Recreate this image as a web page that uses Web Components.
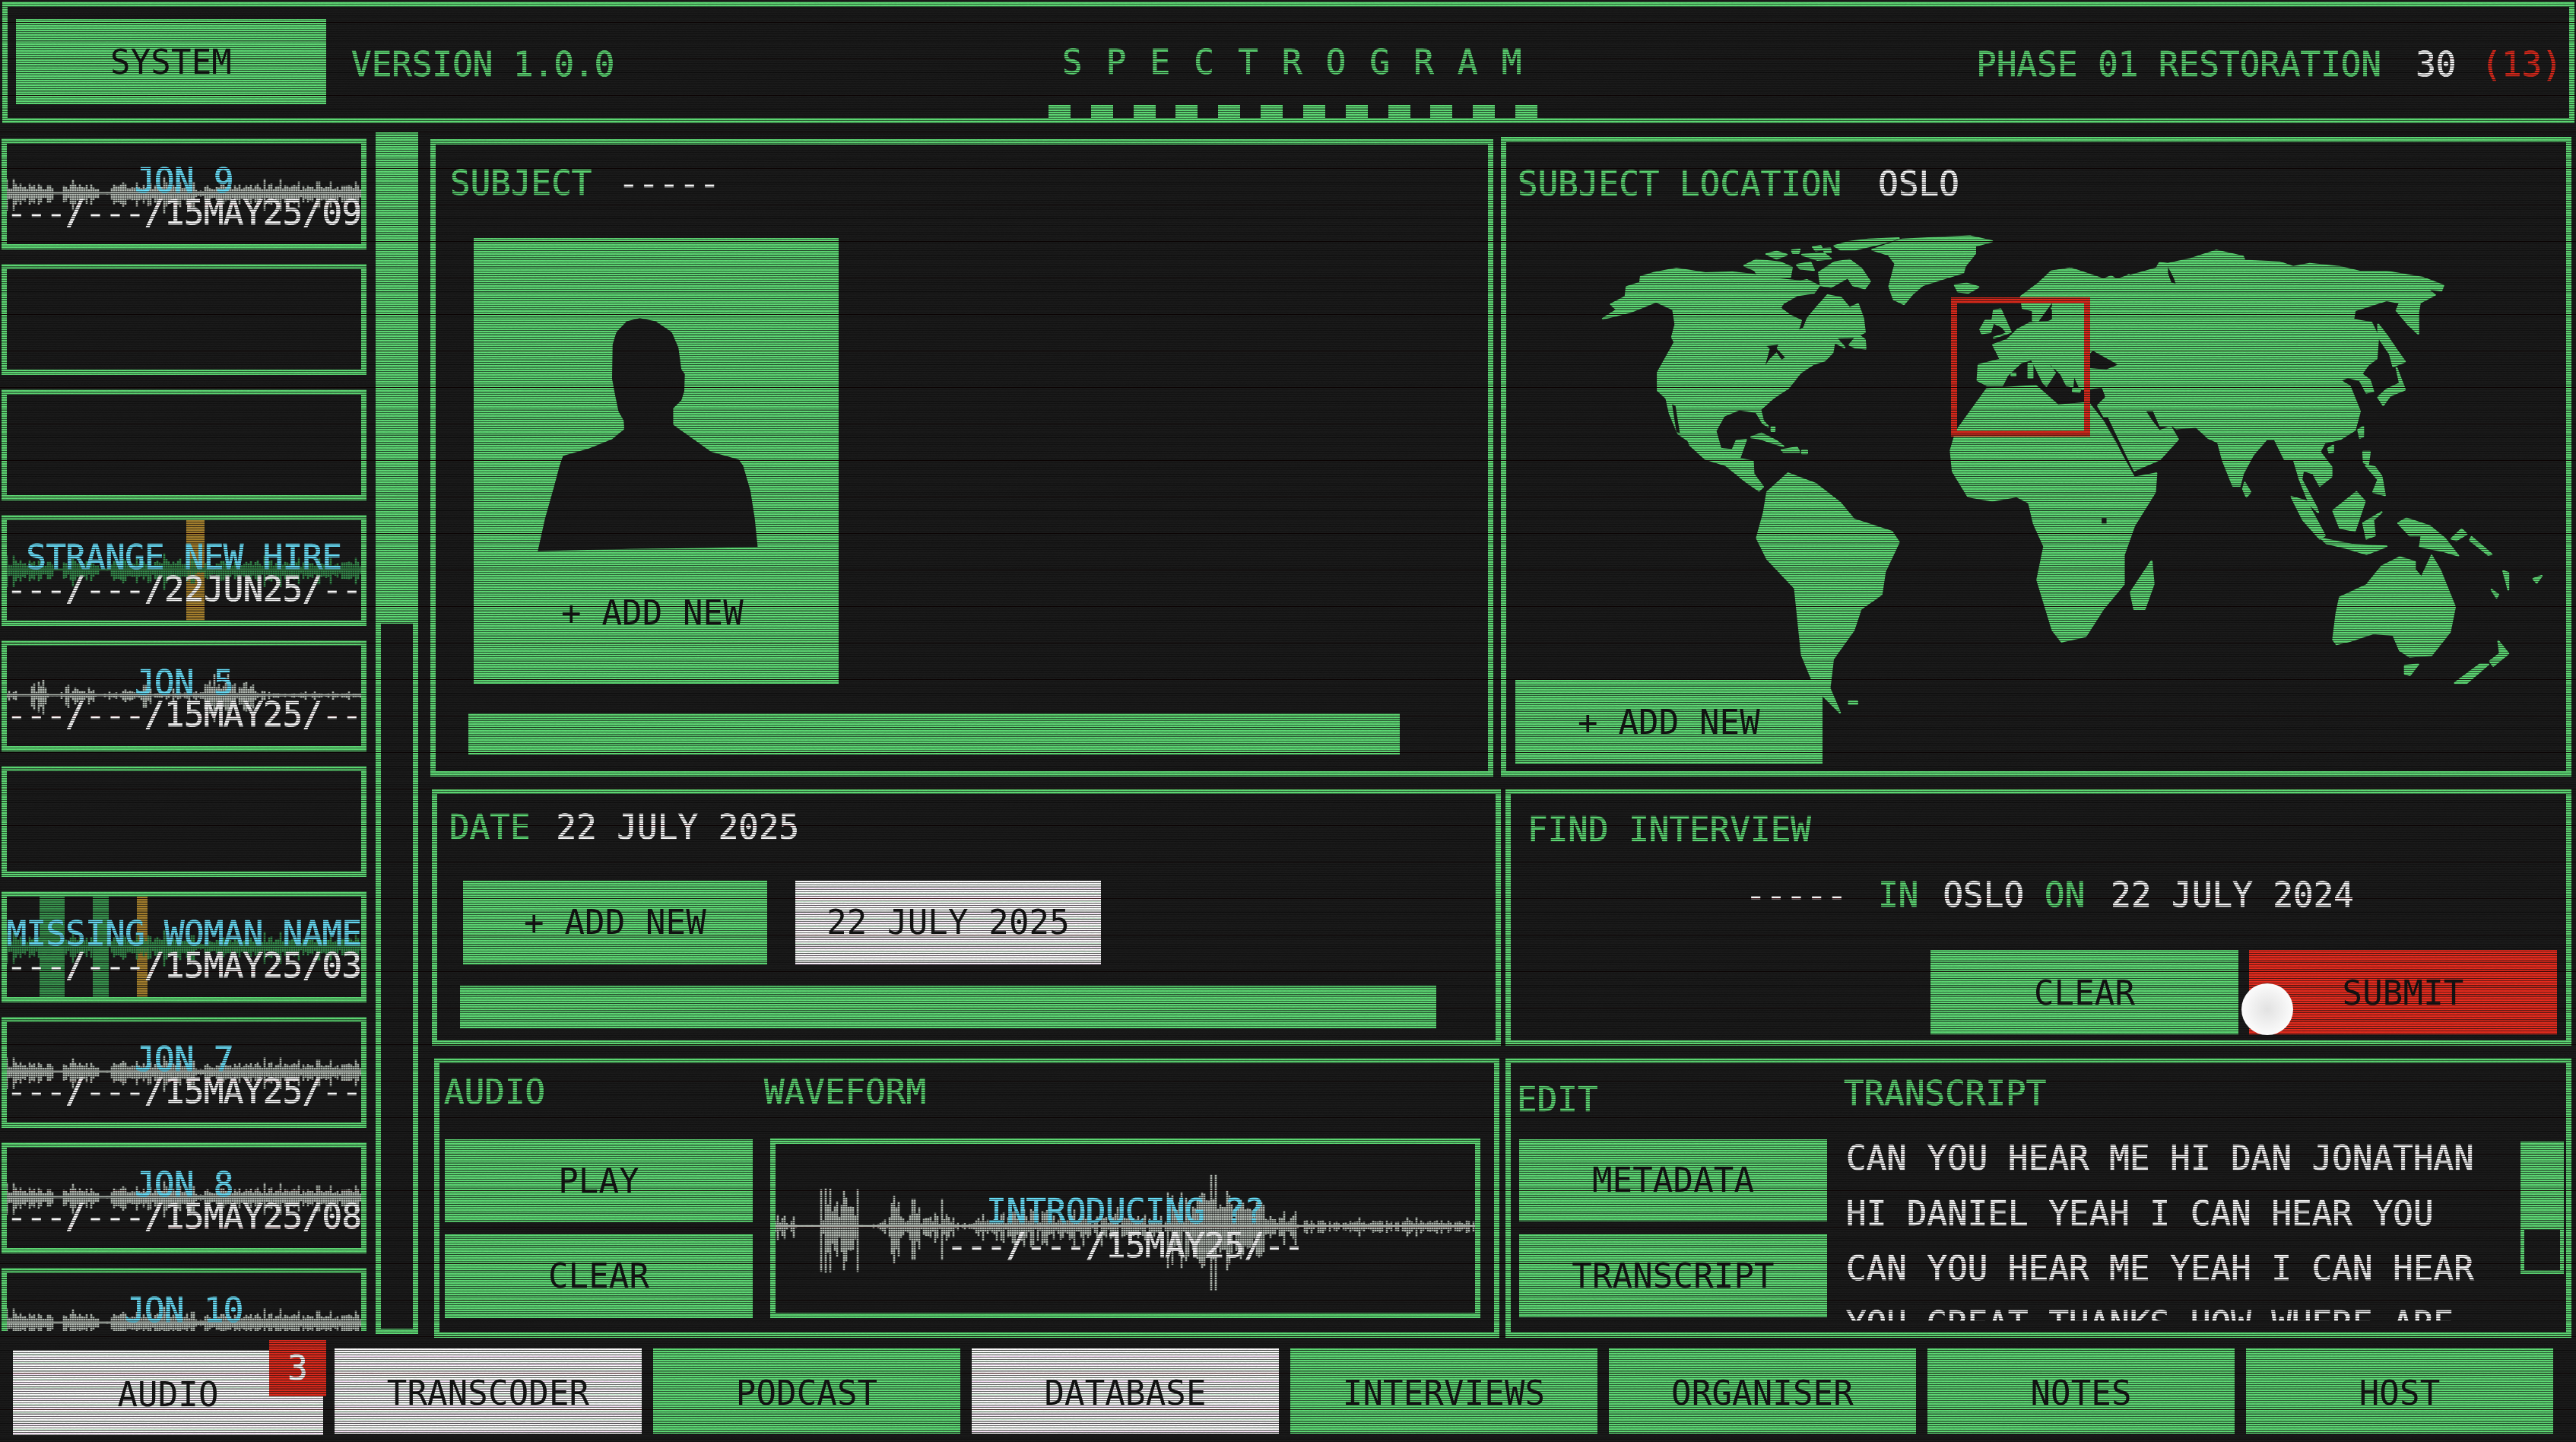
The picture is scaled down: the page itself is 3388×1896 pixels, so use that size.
<!DOCTYPE html>
<html lang="en">
<head>
<meta charset="utf-8">
<title>Spectrogram</title>
<style>
  html, body { margin: 0; padding: 0; background: #1a1a1a; }
  body { width: 3388px; height: 1896px; overflow: hidden;
    font: 400 44px/1 "DejaVu Sans Mono", "Liberation Mono", monospace; letter-spacing:.15px; -webkit-text-stroke:.7px currentColor;
    --g: #5fdc76; --ink: #131313; --cy: #6be4ff; --rd: #e02a1c; --bg:#1a1a1a; color: var(--g); }
</style>
</head>
<body>
<sg-screen>
  <sg-header>
    <sg-btn slot="sys" style="width:408px;height:112px;padding-top:2px;box-sizing:border-box">SYSTEM</sg-btn>
    <span slot="ver">VERSION 1.0.0</span>
    <span slot="title">SPECTROGRAM</span>
    <span slot="phase">PHASE 01 RESTORATION</span>
    <span slot="count">30</span>
    <span slot="over">(13)</span>
  </sg-header>

  <sg-main>
    <sg-list slot="list">
      <sg-clip name="JON 9" date="---/---/15MAY25/09" wave="a"></sg-clip>
      <sg-clip></sg-clip>
      <sg-clip></sg-clip>
      <sg-clip name="STRANGE NEW HIRE" date="---/---/22JUN25/--" wave="a" tone="green" bands="236,24,a"></sg-clip>
      <sg-clip name="JON 5" date="---/---/15MAY25/--" wave="b"></sg-clip>
      <sg-clip></sg-clip>
      <sg-clip name="MISSING WOMAN NAME" date="---/---/15MAY25/03" wave="a" tone="green" bands="43,33,g;113,21,g;171,14,a"></sg-clip>
      <sg-clip name="JON 7" date="---/---/15MAY25/--" wave="a"></sg-clip>
      <sg-clip name="JON 8" date="---/---/15MAY25/08" wave="a"></sg-clip>
      <sg-clip name="JON 10" date="" wave="a"></sg-clip>
    </sg-list>
    <sg-scroll slot="scroll" style="width:56px;height:1580px" thumb="646"></sg-scroll>

    <sg-panel slot="subject" style="margin:3px 10px 0 0;padding:29px 0 0 19px">
      <sg-title label="SUBJECT" gap="35"><b>-----</b></sg-title>
      <sg-photo style="margin:50px 0 0 31px"></sg-photo>
      <sg-bar style="width:1225px;height:54px;margin:39px 0 0 24px"></sg-bar>
    </sg-panel>

    <sg-panel slot="location" style="padding:33px 0 10px 12px;display:flex;flex-direction:column">
      <sg-map></sg-map>
      <sg-title label="SUBJECT LOCATION" gap="48" style="margin-left:3px"><b>OSLO</b></sg-title>
      <sg-btn style="width:404px;height:110px;margin-top:auto;position:relative;padding-top:2px;box-sizing:border-box">+ ADD NEW</sg-btn>
    </sg-panel>

    <sg-panel slot="date" style="margin-left:2px;padding:22px 0 0 16px">
      <sg-title label="DATE" gap="34"><b>22 JULY 2025</b></sg-title>
      <div style="display:flex;gap:37px;margin:48px 0 0 18px">
        <sg-btn style="width:400px;height:110px">+ ADD NEW</sg-btn>
        <sg-btn tone="white" style="width:402px;height:110px">22 JULY 2025</sg-btn>
      </div>
      <sg-bar style="width:1284px;height:56px;margin:28px 0 0 14px"></sg-bar>
    </sg-panel>

    <sg-panel slot="find" style="margin-left:6px;padding:25px 12px 0 22px">
      <sg-title label="FIND INTERVIEW"></sg-title>
      <sg-query style="margin:42px 0 0 287px">
        <b>-----</b><span style="margin-left:41px">IN</span><b style="margin-left:32px">OSLO</b><span style="margin-left:27px">ON</span><b style="margin-left:34px">22 JULY 2024</b>
      </sg-query>
      <div style="display:flex;justify-content:flex-end;gap:14px;margin-top:50px">
        <sg-btn style="width:405px;height:111px;padding-top:3px;box-sizing:border-box">CLEAR</sg-btn>
        <sg-btn tone="red" style="width:405px;height:111px;padding-top:3px;box-sizing:border-box">SUBMIT</sg-btn>
      </div>
    </sg-panel>

    <sg-panel slot="audio" style="margin:0 2px 0 5px;padding:16px 0 0 7px">
      <div style="display:grid;grid-template-columns:405px 934px;column-gap:23px">
        <sg-title label="AUDIO" style="margin-left:-1px"></sg-title>
        <sg-title label="WAVEFORM" style="margin-left:-8px"></sg-title>
        <div style="grid-row:2;grid-column:1;display:flex;flex-direction:column;gap:16px;margin-top:40px">
          <sg-btn style="height:109px">PLAY</sg-btn>
          <sg-btn style="height:110px">CLEAR</sg-btn>
        </div>
        <sg-viewer style="grid-row:2;grid-column:2;margin-top:39px" name="INTRODUCING ??" date="---/---/15MAY25/--"></sg-viewer>
      </div>
    </sg-panel>

    <sg-panel slot="edit" style="margin-left:6px;padding:19px 0 0 11px">
      <div style="display:grid;grid-template-columns:405px 944px;column-gap:25px">
        <sg-title label="EDIT" style="margin:7px 0 0 -3px"></sg-title>
        <sg-title label="TRANSCRIPT" style="margin:-1px 0 0 -3px"></sg-title>
        <div style="grid-row:2;grid-column:1;display:flex;flex-direction:column;gap:17px;margin-top:30px">
          <sg-btn style="height:108px">METADATA</sg-btn>
          <sg-btn style="height:109px">TRANSCRIPT</sg-btn>
        </div>
        <sg-transcript style="grid-row:2;grid-column:2;margin-top:19px">
          <div>CAN YOU HEAR ME HI DAN JONATHAN</div>
          <div>HI DANIEL YEAH I CAN HEAR YOU</div>
          <div>CAN YOU HEAR ME YEAH I CAN HEAR</div>
          <div>YOU GREAT THANKS HOW WHERE ARE</div>
        </sg-transcript>
      </div>
    </sg-panel>
  </sg-main>

  <sg-tabs>
    <sg-btn tone="white" class="t" style="width:408px;margin-top:2px;position:relative">AUDIO<sg-badge>3</sg-badge></sg-btn>
    <sg-btn tone="white" class="t">TRANSCODER</sg-btn>
    <sg-btn class="t">PODCAST</sg-btn>
    <sg-btn tone="white" class="t">DATABASE</sg-btn>
    <sg-btn class="t">INTERVIEWS</sg-btn>
    <sg-btn class="t">ORGANISER</sg-btn>
    <sg-btn class="t">NOTES</sg-btn>
    <sg-btn class="t">HOST</sg-btn>
  </sg-tabs>

  <sg-cursor></sg-cursor>
</sg-screen>

<script>
function el(name, css, html) {
  const sheet = `<style>${css}</style>${html}`;
  customElements.define(name, class extends HTMLElement {
    constructor() { super(); this.attachShadow({ mode: 'open' }).innerHTML = sheet; }
  });
}

/* ---- deterministic waveform drawing ---- */
const ENV = {
  a: [[0,.13,.62],[.13,.155,.02],[.155,.26,.6],[.26,.29,.04],[.29,.53,.72],[.53,.56,.3],[.56,.78,.62],[.78,1,.52]],
  b: [[0,.03,.35],[.03,.065,.03],[.065,.12,1],[.12,.15,.05],[.15,.162,.2],[.162,.178,1],[.178,.255,.5],[.255,.285,.1],[.285,.32,.22],
      [.32,.41,.45],[.41,.47,.3],[.47,.53,.35],[.53,.56,.3],[.56,.7,.95],[.7,.75,.28],[.75,.83,.16],[.83,1,.16]]
};
function wavePath(kind, W, H) {
  let seed = kind === 'a' ? 4721 : 913, d = '';
  const rnd = () => (seed = (seed * 16807) % 2147483647) / 2147483647;
  const c = H / 2, env = ENV[kind];
  for (let x = 0; x < W; x += 3) {
    const f = x / W, seg = env.find(s => f >= s[0] && f < s[1]) || env[env.length - 1];
    let a = seg[2] * (.25 + rnd() * .45);
    if (rnd() > .9) a = seg[2];
    if (kind === 'b' && rnd() < .2) a *= .3;
    d += `M${x} ${(c - a * c * .8).toFixed(1)}V${(c + a * c).toFixed(1)}`;
  }
  return d;
}
function waveSvg(kind, W, H, color) {
  return `<svg viewBox="0 0 ${W} ${H}" preserveAspectRatio="none" style="display:block;width:100%;height:100%">
    <path d="${wavePath(kind, W, H)}" stroke="${color}" stroke-width="2.6" fill="none"/>
    <rect x="0" y="${H/2-1.5}" width="${W}" height="3" fill="${color}"/></svg>`;
}

el('sg-screen', `
  :host { display:block; position:relative; width:3388px; height:1896px; overflow:hidden; padding-top:2px; box-sizing:border-box; background:var(--bg); }
  .scan, .red, svg { position:absolute; inset:0; width:100%; height:100%; pointer-events:none; z-index:10; }
  .scan { background:
    repeating-linear-gradient(180deg, transparent 0 10px, rgba(14,14,14,.3) 10px 11px),
    repeating-linear-gradient(180deg, transparent 0 2px, rgba(14,14,14,.62) 2px 3px); }
  .red { mix-blend-mode:multiply; background:
    repeating-linear-gradient(180deg, #fff 0 29px, #8a2028 29px 30px, #fff 30px 47px, #aaa 47px 48px); }
  svg { mix-blend-mode:multiply; opacity:.5; }
`, `<slot></slot><div class="scan"></div><div class="red"></div>
  <svg xmlns="http://www.w3.org/2000/svg"><filter id="n" x="0" y="0" width="100%" height="100%"><feTurbulence type="fractalNoise" baseFrequency=".35 .95" numOctaves="2" seed="7"/><feColorMatrix values="0 0 0 0 .75  0 0 0 0 .75  0 0 0 0 .75  1.6 0 0 0 -.25"/></filter><rect width="100%" height="100%" filter="url(#n)"/></svg>`);

el('sg-header', `
  :host { display:grid; grid-template-columns:1358px 643px 1fr; width:3383px; height:160px; margin-left:3px; box-sizing:border-box;
    border:7px solid var(--g); padding:0 9px 0 11px; }
  .l { display:flex; gap:33px; padding-top:16px; }
  .v { padding-top:38px; }
  .c { display:flex; flex-direction:column; justify-content:space-between; padding-top:51px; }
  .t { letter-spacing:31.3px; margin-left:18px; white-space:nowrap; }
  .ticks { display:flex; justify-content:space-between; }
  .ticks i { display:block; width:29px; height:17px; background:var(--g); }
  .r { display:flex; justify-content:flex-end; padding-top:54px; }
  ::slotted([slot=count]) { color:#fff; margin-left:45px; }
  ::slotted([slot=over]) { color:var(--rd); margin-left:33px; }
`, `<div class="l"><slot name="sys"></slot><div class="v"><slot name="ver"></slot></div></div>
  <div class="c"><div class="t"><slot name="title"></slot></div><div class="ticks">${'<i></i>'.repeat(12)}</div></div>
  <div class="r"><slot name="phase"></slot><slot name="count"></slot><slot name="over"></slot></div>`);

el('sg-main', `
  :host { display:grid; grid-template-columns:480px 56px 1408px 1408px; grid-template-rows:841px 338px 368px; row-gap:0;
    margin:12px 0 0 2px; height:1585px; }
  .a { grid-row:1 / span 3; grid-column:1; padding-top:8px; margin-right:-12px; }
  .b { grid-row:1 / span 3; grid-column:2; margin-left:12px; }
  .c { grid-row:1 / span 3; grid-column:3 / span 2; margin:6px -28px 0 28px; display:grid;
    grid-template-columns:1408px 1408px; grid-template-rows:841px 338px 368px; row-gap:16px; }
`, `<div class="a"><slot name="list"></slot></div>
    <div class="b"><slot name="scroll"></slot></div>
    <div class="c">
      <slot name="subject"></slot><slot name="location"></slot>
      <slot name="date"></slot><slot name="find"></slot>
      <slot name="audio"></slot><slot name="edit"></slot>
    </div>`);

el('sg-list', `
  :host { display:flex; flex-direction:column; gap:19px; width:480px; height:1568px; overflow:hidden; }
`, `<slot></slot>`);

customElements.define('sg-clip', class extends HTMLElement {
  constructor() {
    super();
    this.attachShadow({ mode: 'open' });
  }
  connectedCallback() {
    const name = this.getAttribute('name') || '', date = this.getAttribute('date') || '',
      wave = this.getAttribute('wave'), green = this.getAttribute('tone') === 'green',
      bands = (this.getAttribute('bands') || '').split(';').filter(Boolean).map(b => b.split(','));
    this.shadowRoot.innerHTML = `<style>
      :host { display:block; flex:none; position:relative; width:480px; height:146px; box-sizing:border-box; border:7px solid var(--g); }
      .band { position:absolute; top:0; bottom:0; }
      .wave { position:absolute; left:0; right:0; top:28px; height:74px; }
      .txt { position:relative; display:flex; flex-direction:column; align-items:center; padding-top:28px; line-height:42px; letter-spacing:-.55px; white-space:nowrap; }
      .n { color:var(--cy); } .d { color:#fff; }
    </style>
    ${bands.map(b => `<div class="band" style="left:${b[0]}px;width:${b[1]}px;background:${b[2] === 'a' ? '#a8822e' : '#39964f'}"></div>`).join('')}
    ${wave ? `<div class="wave">${waveSvg(wave, 466, 74, green ? '#37904e' : '#b6beb6')}</div>` : ''}
    ${name ? `<div class="txt"><span class="n">${name}</span><span class="d">${date}</span></div>` : ''}`;
  }
});

customElements.define('sg-scroll', class extends HTMLElement {
  constructor() { super(); this.attachShadow({ mode: 'open' }); }
  connectedCallback() {
    this.shadowRoot.innerHTML = `<style>
      :host { display:block; box-sizing:border-box; border:7px solid var(--g); border-top:0; }
      div { height:${this.getAttribute('thumb')}px; background:var(--g); margin:0 -7px; }
    </style><div></div>`;
  }
});

el('sg-panel', `
  :host { display:block; position:relative; box-sizing:border-box; border:7px solid var(--g); min-width:0; }
`, `<slot></slot>`);

customElements.define('sg-title', class extends HTMLElement {
  constructor() { super(); this.attachShadow({ mode: 'open' }); }
  connectedCallback() {
    this.shadowRoot.innerHTML = `<style>
      :host { display:flex; gap:${this.getAttribute('gap') || 0}px; white-space:pre; position:relative; }
      ::slotted(b) { font-weight:400; color:#fff; }
    </style><span>${this.getAttribute('label')}</span><slot></slot>`;
  }
});

el('sg-query', `
  :host { display:flex; white-space:pre; }
  ::slotted(b) { font-weight:400; color:#fff; }
`, `<slot></slot>`);

el('sg-btn', `
  :host { display:flex; align-items:center; justify-content:center; background:var(--g); color:var(--ink); white-space:pre; flex:none; -webkit-text-stroke:0; }
  :host([tone=white]) { background:repeating-linear-gradient(180deg,#fff 0 5px,#d6f6dc 5px 6px,#fff 6px 10px,#f8dcf8 10px 11px); }
  :host([tone=red]) { background:#ec2c1e; }
  :host(.t) { width:404px; height:112px; box-sizing:border-box; padding-top:6px; }
`, `<slot></slot>`);

el('sg-bar', `:host { display:block; background:var(--g); }`, ``);

el('sg-badge', `
  :host { position:absolute; top:-13px; right:-4px; width:75px; height:74px; display:flex; align-items:center; justify-content:center;
    background:var(--rd); color:#fff; -webkit-text-stroke:.7px #fff; }
`, `<slot></slot>`);

el('sg-tabs', `
  :host { display:flex; gap:15px; padding-left:17px; margin-top:14px; align-items:flex-start; }
`, `<slot></slot>`);

el('sg-photo', `
  :host { display:block; position:relative; width:480px; height:586px; background:var(--g); color:var(--ink); -webkit-text-stroke:0; }
  svg { position:absolute; left:0; top:0; width:100%; height:100%; }
  span { position:absolute; left:0; right:10px; top:471px; text-align:center; white-space:pre; }
`, `<svg viewBox="165 57 1253 1435" preserveAspectRatio="none"><path fill="#1a1a1a" d="M385 1065 L410 960 L440 860 L460 790 L472 758 L560 735 L640 705 L682 672 L680 645 L662 615 L650 560 L640 510 L642 400 L655 360 L690 325 L735 315 L790 325 L845 360 L868 410 L878 480 L890 495 L888 550 L878 580 L850 605 L850 658 L905 695 L980 745 L1075 770 L1090 790 L1115 870 L1130 960 L1140 1052 L970 1055 L700 1058 Z"/></svg>
  <span>+ ADD NEW</span>`);

el('sg-map', `
  :host { position:absolute; left:119px; top:113px; width:1250px; height:650px; display:block; }
  svg { display:block; width:100%; height:100%; overflow:visible; }
  .l { fill:var(--g); stroke:var(--g); stroke-width:2.5px; stroke-linejoin:round; vector-effect:non-scaling-stroke; }
  .s { fill:#1a1a1a; }
`, `<svg viewBox="2100 300 1250 650">
  <g transform="translate(2100 290) scale(.4464 .3333)">
    <path class="l" d="M18 387L60 352L42 330L85 300L88 262L128 245L130 222L165 208L235 190L320 208L400 205L470 215L480 225L540 232L600 240L620 235L655 258L640 285L590 295L550 325L540 345L570 375L602 395L592 438L610 425L622 385L650 340L680 295L720 305L745 345L770 330L785 385L790 440L760 460L705 462L730 500L700 480L695 520L672 552L640 565L600 600L565 660L520 700L482 745L490 790L505 812L490 800L470 755L420 745L375 770L350 830L365 900L400 905L412 868L440 865L420 940L460 950L462 1000L490 1050L478 1065L440 1030L380 965L320 940L275 885L270 868L240 840L215 760L205 700L180 670L180 600L230 480L222 460L232 410L225 350L175 320L100 360Z"/>
    <path class="l" d="M812 115L900 75L1000 68L1100 62L1165 82L1115 100L1115 130L1085 180L1080 205L1020 230L960 255L930 290L905 330L875 310L862 260L880 170L860 135Z"/>
    <path class="l" d="M700 100L740 85L800 75L890 70L840 90L760 115L720 115Z"/>
    <path class="l" d="M500 132L530 122L560 135L530 150ZM575 118L598 115L595 128L578 128ZM435 178L470 155L540 165L575 185L570 222L480 225L465 195Z"/>
    <path class="l" d="M590 175L630 165L640 195L600 190ZM605 135L670 130L690 150L650 155ZM637 105L660 100L665 115L645 118ZM668 112L688 110L690 125L672 125Z"/>
    <path class="l" d="M655 205L700 165L745 155L780 190L805 240L790 268L755 255L740 225L690 262L660 255Z"/>
    <path class="l" d="M1055 255L1090 248L1125 262L1095 285L1065 280Z"/>
    <path class="l" d="M745 490L770 450L790 470L792 505L760 500Z"/>
    <path class="l" d="M455 855L485 840L530 870L550 890L520 878L480 860ZM545 905L590 895L597 912L550 912ZM605 908H620V918H605ZM515 815H524V830H515Z"/>
    <path class="s" d="M222 725L232 730L245 838L235 835ZM500 495L535 490L530 505L555 540L545 548L530 520L510 545L497 570L505 530L510 505Z"/>
    <path class="l" d="M1250 300L1300 250L1340 200L1400 190L1490 230L1500 260L1568 215L1568 700L1500 690L1490 655L1430 665L1425 600L1405 610L1402 655L1385 650L1368 605L1310 530L1350 600L1325 652L1316 640L1282 548L1250 560L1210 610L1195 650L1150 650L1122 630L1125 570L1190 548L1168 490L1210 470L1240 430L1275 405L1330 400L1365 380L1340 345L1388 325L1340 322L1300 395L1285 395L1285 355L1255 345Z"/>
    <path class="s" d="M1360 265L1385 262L1370 290L1345 290Z"/>
    <path class="l" d="M1165 400L1170 355L1190 350L1200 380L1220 440L1170 462L1210 445L1195 420ZM1130 430L1145 395L1170 395L1160 440L1135 445ZM1272 565H1284V620H1272ZM1222 604H1234V612H1222Z"/>
  </g>
  <g transform="translate(2700 300) scale(.4388 .4082)">
    <path class="l" d="M0 140L50 130L150 165L175 155L190 165L260 145L310 130L320 112L345 115L410 100L490 72L570 92L575 105L680 110L720 125L770 115L860 125L920 140L1000 140L1110 160L1170 185L1165 200L1120 195L1145 215L1100 240L1095 270L1095 340L1065 310L1030 265L1040 240L1000 232L905 265L900 295L955 305L975 350L970 420L945 440L925 470L950 490L960 525L940 530L920 490L885 480L860 490L890 510L920 590L905 650L860 680L815 690L800 720L835 770L835 800L800 830L780 790L750 780L745 810L790 900L795 915L770 890L740 810L722 745L695 745L665 680L640 680L600 730L570 790L560 830L540 830L510 750L495 690L465 675L430 640L370 645L345 625L375 680L320 745L245 780L210 730L155 610L135 572L160 545L155 512L80 512L60 465L40 440L0 450Z"/>
    <path class="s" d="M95 420L120 395L195 440L160 455L100 450ZM150 610L165 610L205 700L240 778L225 770L195 700ZM280 590L300 590L320 640L345 640L320 650L295 615ZM345 125L362 160L368 178L355 175L345 145Z"/>
    <path class="l" d="M975 310L1000 345L1035 400L1055 430L1020 445L1010 405L975 350ZM975 545L1000 520L1040 500L1030 450L1055 520L1010 540L990 570ZM915 650L930 640L930 670L920 675ZM825 710L840 700L840 720L828 722ZM930 720L950 720L945 760L932 755ZM938 765L965 770L985 800L995 860L960 850L975 810ZM840 910L910 850L935 880L905 975L860 965ZM715 865L760 880L815 990L800 1000L750 940ZM805 1000L900 1020L1000 1025L940 1050L880 1030L820 1015ZM575 820L592 850L580 865L570 840ZM930 950L985 915L960 940L965 990L940 1000ZM1035 950L1060 935L1130 960L1175 1000L1215 1055L1170 1040L1100 1025L1105 990L1070 990ZM1195 1000L1225 970L1240 985L1210 1005ZM1255 995L1315 1050L1305 1052L1250 1005ZM850 1240L860 1190L940 1150L985 1090L1040 1060L1085 1075L1085 1100L1105 1125L1135 1055L1160 1100L1205 1220L1190 1300L1135 1375L1070 1380L1040 1360L1020 1310L960 1305L890 1330L850 1340L840 1325ZM1055 1410L1095 1405L1070 1440L1055 1435ZM1205 1465L1280 1405L1305 1405L1240 1465ZM1310 1395L1340 1370L1335 1330L1350 1350L1365 1370L1320 1410ZM1440 1130L1465 1120L1450 1142ZM1315 1165L1335 1180L1330 1190ZM1350 1105L1365 1110L1365 1165L1358 1135Z"/>
    <path class="l" d="M60 518L82 518L80 528L60 526Z"/>
  </g>
  <g transform="translate(1960 170) scale(.9107 .5485)">
    <path class="l" d="M717 623L673 724L665 770L668 820L690 880L725 890L760 880L778 895L785 945L800 1000L790 1080L812 1200L825 1228L860 1215L885 1150L915 1090L915 1020L930 950L960 870L962 825L930 835L915 790L885 700L864 656L820 662L788 615Z"/>
    <path class="l" d="M400 870L430 825L470 850L505 895L525 935L580 965L590 990L570 1060L565 1115L535 1150L525 1200L495 1270L490 1340L505 1398L470 1340L450 1260L440 1100L400 1030L385 980L395 920Z"/>
    <path class="l" d="M955 1035L958 1090L945 1150L930 1150L925 1110L945 1060ZM518 1372H530V1378H518Z"/>
    <path class="s" d="M883 932H890V945H883Z"/>
  </g>
  <rect x="2570" y="395" width="175" height="175" fill="none" stroke="#e02a1c" stroke-width="8"/>
</svg>`);

customElements.define('sg-viewer', class extends HTMLElement {
  constructor() { super(); this.attachShadow({ mode: 'open' }); }
  connectedCallback() {
    this.shadowRoot.innerHTML = `<style>
      :host { display:block; position:relative; box-sizing:border-box; height:236px; border:7px solid var(--g); }
      .w { position:absolute; left:0; right:0; top:19px; height:178px; }
      .t { position:relative; display:flex; flex-direction:column; align-items:center; padding-top:67px; white-space:pre; letter-spacing:-.4px; }
      .n { color:var(--cy); } .d { color:#fff; margin-top:1px; }
    </style><div class="w">${waveSvg('b', 920, 178, '#b6beb6')}</div>
    <div class="t"><span class="n">${this.getAttribute('name')}</span><span class="d">${this.getAttribute('date')}</span></div>`;
  }
});

el('sg-transcript', `
  :host { display:flex; height:250px; }
  .txt { width:887px; overflow:hidden; height:250px; color:#fff; line-height:72.5px; white-space:nowrap; }
  .sb { display:block; box-sizing:border-box; width:57px; height:174px; margin-top:14px; border:5px solid var(--g); }
  .sb div { height:116px; margin:-5px; background:var(--g); }
`, `<div class="txt"><slot></slot></div><div class="sb"><div></div></div>`);

el('sg-cursor', `
  :host { position:absolute; left:2948px; top:1293px; width:68px; height:68px; border-radius:50%; z-index:30; display:block;
    background:radial-gradient(circle at 50% 50%, #e2e2e2 0, #f2f2f2 45%, #fff 80%); }
`, ``);
</script>
</body>
</html>
